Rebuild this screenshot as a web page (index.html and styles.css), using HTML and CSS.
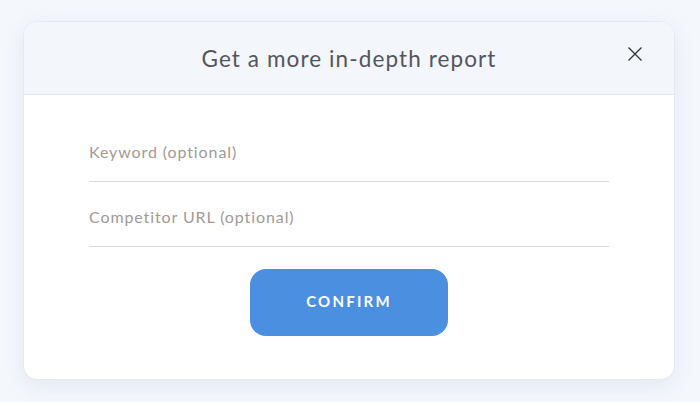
FILE: index.html
```html
<!DOCTYPE html>
<html>
<head>
<meta charset="utf-8">
<link rel="stylesheet" href="styles.css">
</head>
<body>
<div class="backdrop">
  <div class="modal">
    <div class="modal-header">
      <h2 class="title">Get a more in-depth report</h2>
      <button class="close" aria-label="Close">
        <svg width="16" height="16" viewBox="0 0 16 16"><path d="M1.5 1.5 L14.5 14.5 M14.5 1.5 L1.5 14.5" stroke="#333" stroke-width="1.3" fill="none"/></svg>
      </button>
    </div>
    <div class="modal-body">
      <div class="field"><span class="placeholder">Keyword (optional)</span></div>
      <div class="field"><span class="placeholder">Competitor URL (optional)</span></div>
      <button class="confirm">CONFIRM</button>
    </div>
  </div>
</div>
</body>
</html>
```

FILE: styles.css
```css
html, body {
  margin: 0;
  padding: 0;
  width: 700px;
  height: 402px;
  overflow: hidden;
  background: #f4f7fc;
  font-family: Lato, "Noto Sans", sans-serif;
}
.backdrop {
  padding: 21px 25px 0 23px;
}
.modal {
  width: 652px;
  height: 359px;
  box-sizing: border-box;
  background: #fff;
  border: 1px solid #e6e9ef;
  border-radius: 14px;
  box-shadow: 0 6px 18px rgba(180, 190, 220, 0.25);
  overflow: hidden;
  display: flex;
  flex-direction: column;
}
.modal-header {
  height: 72px;
  flex: none;
  background: #f3f6fb;
  border-bottom: 1px solid #e3e6ec;
  display: flex;
  align-items: center;
  justify-content: center;
  position: relative;
}
.title {
  margin: 0;
  font-size: 22.5px;
  font-weight: 400;
  color: #53555d;
  letter-spacing: 1.1px;
}
.close {
  position: absolute;
  right: 31px;
  top: 24px;
  background: none;
  border: 0;
  padding: 0;
  width: 16px;
  height: 16px;
  cursor: pointer;
}
.close svg { display: block; }
.modal-body {
  padding: 39px 65px 0 65px;
  display: flex;
  flex-direction: column;
  align-items: center;
}
.field {
  width: 520px;
  height: 47px;
  border-bottom: 1px solid #d9d9df;
  display: flex;
  align-items: flex-start;
  margin-bottom: 17px;
}
.placeholder {
  font-size: 16px;
  color: #a19a97;
  letter-spacing: 0.9px;
  line-height: 20px;
  margin-top: 8px;
}
.confirm {
  margin-top: 5px;
  width: 198px;
  height: 67px;
  padding: 0 0 4px 0;
  border: 0;
  border-radius: 16px;
  background: #4a8fe0;
  color: #fff;
  font-family: Lato, "Noto Sans", sans-serif;
  font-weight: 700;
  font-size: 15px;
  letter-spacing: 2.2px;
  cursor: pointer;
}
```
